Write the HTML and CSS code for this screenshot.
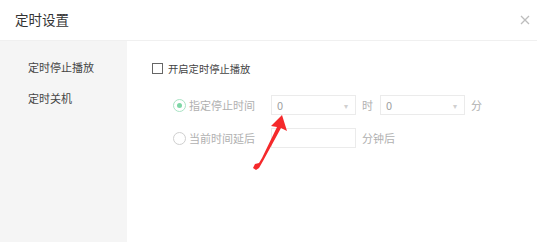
FILE: index.html
```html
<!DOCTYPE html>
<html lang="zh-CN">
<head>
<meta charset="UTF-8" />
<title>定时设置</title>
<link rel="stylesheet" href="styles.css">
</head>
<body>

<section class="timerDialog">
  <header class="dialogHead">
    <div class="dialogTitle">定时设置</div>
    <svg class="closeBtn" width="10" height="10" viewBox="0 0 10 10">
      <path d="M1 1 L9 9 M9 1 L1 9" stroke="#bdbdbd" stroke-width="1.3" fill="none" />
    </svg>
  </header>

  <div class="dialogBody">
    <nav class="sideMenu">
      <div class="sideItem">定时停止播放</div>
      <div class="sideItem">定时关机</div>
    </nav>

    <div class="mainPane">
      <div class="checkRow">
        <span class="checkBox"></span>
        <span class="checkLabel">开启定时停止播放</span>
      </div>

      <div class="radioRow">
        <span class="radio radioOn"></span>
        <span class="radioLabel">指定停止时间</span>
        <div class="selectBox"><span>0</span><i class="caret">▾</i></div>
        <span class="unit">时</span>
        <div class="selectBox"><span>0</span><i class="caret">▾</i></div>
        <span class="unit">分</span>
      </div>

      <div class="radioRow">
        <span class="radio"></span>
        <span class="radioLabel">当前时间延后</span>
        <div class="selectBox"></div>
        <span class="unit">分钟后</span>
      </div>
    </div>
  </div>

  <!-- red annotation arrow -->
  <svg class="redArrow" width="50" height="70" viewBox="250 110 50 70">
    <polygon fill="#f5292b" points="282,115 271,126 277,127 262,158 259,163 255,164 253,168 256,170 259,168 263,161 281,128 287,131" />
  </svg>
</section>

</body>
</html>
```

FILE: styles.css
```css
* {
  box-sizing: border-box;
}

body {
  margin: 0;
  font-family: "Noto Sans CJK SC", "Noto Sans", sans-serif;
  background: #fff;
}

.timerDialog {
  position: relative;
  width: 537px;
  height: 242px;
  overflow: hidden;
  background: #fff;
}

.dialogHead {
  height: 41px;
  padding: 0 6px 0 15px;
  display: flex;
  align-items: center;
  justify-content: space-between;
  border-bottom: 1px solid #f0f0f0;
}

.dialogTitle {
  font-size: 13.5px;
  color: #333;
  margin-top: -2px;
}

.closeBtn {
  margin-right: 1px;
}

.dialogBody {
  display: flex;
  height: 201px;
}

.sideMenu {
  width: 127px;
  background: #f5f5f5;
  padding: 18px 0 0 28px;
}

.sideItem {
  font-size: 11px;
  color: #444;
  height: 31px;
  line-height: 16px;
}

.mainPane {
  flex: 1;
  padding: 20px 0 0 25px;
}

.checkRow {
  display: flex;
  align-items: center;
  height: 14px;
  margin-bottom: 20px;
}

.checkBox {
  width: 11px;
  height: 11px;
  border: 1px solid #666;
  background: #fff;
}

.checkLabel {
  font-size: 10.3px;
  color: #444;
  margin-left: 5px;
}

.radioRow {
  display: flex;
  align-items: center;
  height: 20px;
  margin-bottom: 13px;
  padding-left: 21px;
}

.radio {
  width: 13px;
  height: 13px;
  border-radius: 50%;
  border: 1px solid #cfcfcf;
  display: flex;
  align-items: center;
  justify-content: center;
}

.radioOn {
  border-color: #a9e3c4;
}

.radioOn::after {
  content: "";
  width: 5px;
  height: 5px;
  border-radius: 50%;
  background: #7ed6a6;
}

.radioLabel {
  font-size: 11px;
  color: #b0b0b0;
  width: 82px;
  margin-left: 3px;
}

.selectBox {
  width: 85px;
  height: 20px;
  border: 1px solid #ebebeb;
  display: flex;
  align-items: center;
  justify-content: space-between;
  padding: 0 7px 0 5px;
  font-size: 11px;
  color: #a0a0a0;
}

.caret {
  font-style: normal;
  font-size: 8px;
  color: #d0d0d0;
}

.unit {
  font-size: 11px;
  color: #b0b0b0;
  margin: 0 7px 0 6px;
}

.redArrow {
  position: absolute;
  left: 250px;
  top: 110px;
}
```
